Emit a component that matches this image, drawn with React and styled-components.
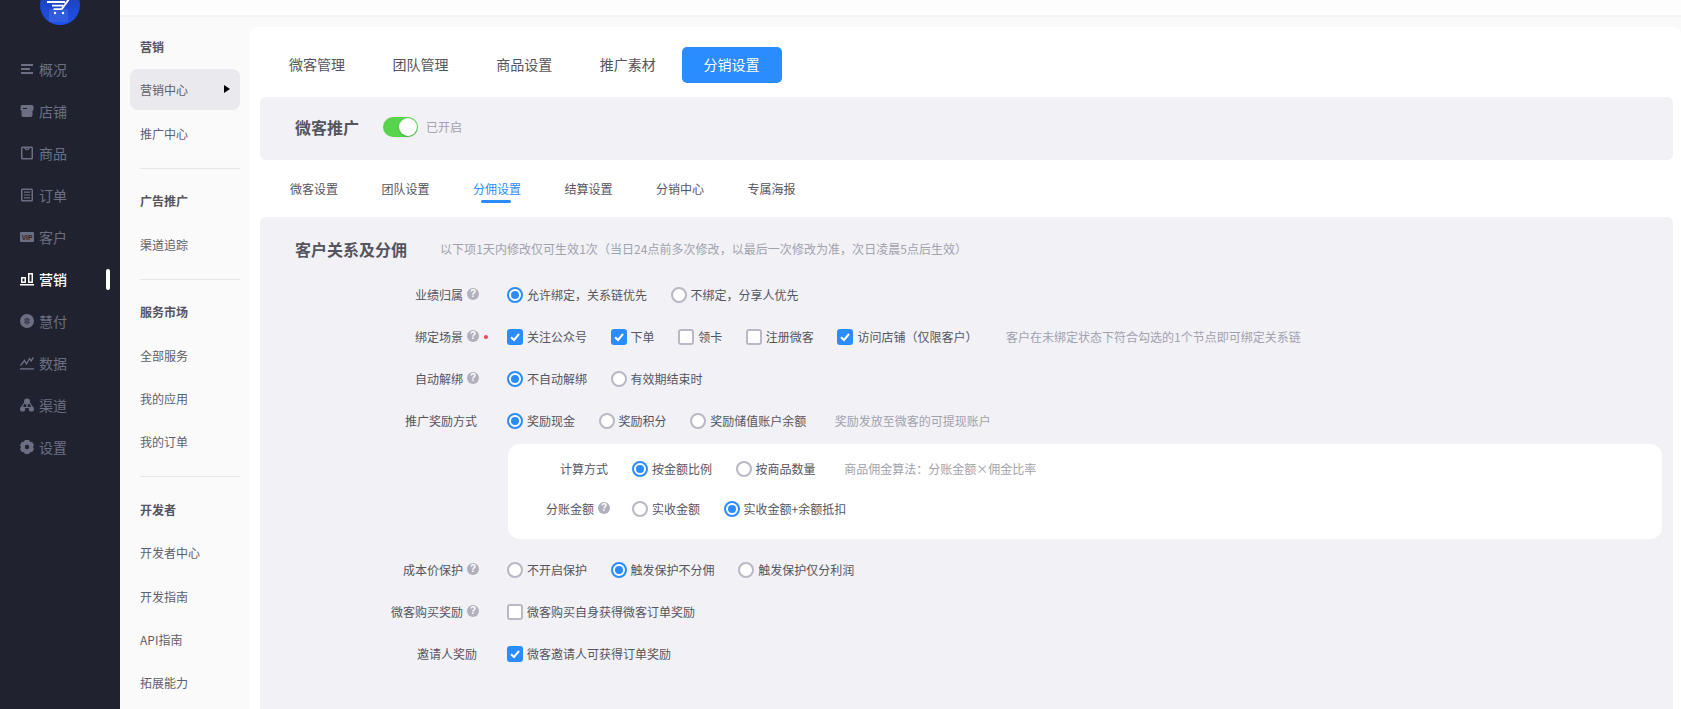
import React from "react";
import styled, { createGlobalStyle } from "styled-components";

const GlobalStyle = createGlobalStyle`
  * { box-sizing: border-box; }
  html, body { margin: 0; padding: 0; height: 100%; background: #fff; }
  body {
    font-family: "Noto Sans CJK SC", "Liberation Sans", sans-serif;
    color: #55555f;
    overflow: hidden;
  }
`;

const Page = styled.div`
  display: flex;
  width: 100%;
  height: 709px;
  overflow: hidden;
`;

const Sidebar = styled.aside`
  width: 120px;
  flex: none;
  background: #20232f;
`;

const Logo = styled.svg`
  display: block;
  width: 40px;
  height: 25px;
  margin: 0 auto 23px;
`;

const SideItem = styled.div`
  position: relative;
  display: flex;
  align-items: center;
  gap: 5px;
  height: 42px;
  padding-left: 20px;
  font-size: 14px;
  font-weight: ${({ $active }) => ($active ? 500 : 400)};
  color: ${({ $active }) => ($active ? "#fff" : "#6c6f83")};
  svg { width: 14px; height: 14px; flex: none; }
`;

const SideMark = styled.span`
  position: absolute;
  right: 10px;
  top: 11px;
  width: 4px;
  height: 21px;
  border-radius: 2px;
  background: #fff;
`;

const Body = styled.div`
  flex: 1;
  min-width: 0;
  display: flex;
  flex-direction: column;
  background: #fafafb;
`;

const TopBar = styled.div`
  height: 17px;
  flex: none;
  background: #fdfdfd;
  border-bottom: 2px solid #f3f3f4;
`;

const Columns = styled.div`
  flex: 1;
  display: flex;
  min-height: 0;
`;

const SubNav = styled.nav`
  width: 130px;
  flex: none;
  padding: 9px 10px 0 10px;
`;

const NavTitle = styled.div`
  display: flex;
  align-items: center;
  height: 41px;
  margin-bottom: 2.4px;
  padding-left: 10px;
  font-size: 12px;
  font-weight: 700;
  color: #55555f;
`;

const NavLink = styled.div`
  position: relative;
  display: flex;
  align-items: center;
  height: 41px;
  margin-bottom: 2.4px;
  padding-left: 10px;
  font-size: 12px;
  color: #5f5f69;
  border-radius: 8px;
  background: ${({ $active }) => ($active ? "#e9e9ee" : "transparent")};
`;

const NavArrow = styled.span`
  position: absolute;
  right: 10px;
  top: 16px;
  border-left: 6px solid #000;
  border-top: 4px solid transparent;
  border-bottom: 4px solid transparent;
`;

const NavLine = styled.div`
  height: 1px;
  margin: 14px 0 11.500px 10px;
  background: #e6e6e8;
`;

const Panel = styled.main`
  flex: 1;
  min-width: 0;
  margin-top: 10px;
  padding-top: 20px;
  background: #fff;
  border-radius: 8px 8px 0 0;
`;

const TopTabs = styled.div`
  display: flex;
  margin-left: 15.200px;
  height: 36px;
`;

const TopTab = styled.div`
  display: flex;
  align-items: center;
  margin-left: ${({ $active }) => ($active ? "2px" : "0")};
  padding: 0 ${({ $active }) => ($active ? "22px" : "23.800px")} 2px;
  font-size: 14px;
  border-radius: 5px;
  color: ${({ $active }) => ($active ? "#fff" : "#55555f")};
  background: ${({ $active }) => ($active ? "#2b8cff" : "transparent")};
`;

const SwitchCard = styled.section`
  display: flex;
  align-items: center;
  height: 63px;
  margin: 14px 8px 0 10px;
  padding: 0 0 3px 35px;
  background: #f1f1f6;
  border-radius: 6px;
`;

const CardTitle = styled.h2`
  margin: 0;
  font-size: 16px;
  font-weight: 700;
  color: #55555f;
`;

const Toggle = styled.span`
  position: relative;
  width: 35px;
  height: 20px;
  margin-left: 24px;
  border-radius: 10px;
  background: #58d34e;
  &::after {
    content: "";
    position: absolute;
    right: 1px;
    top: 1px;
    width: 18px;
    height: 18px;
    border-radius: 50%;
    background: #fff;
    box-shadow: 0 1px 2px rgba(0, 0, 0, 0.2);
  }
`;

const ToggleText = styled.span`
  margin-left: 8px;
  padding-bottom: 2px;
  font-size: 12px;
  color: #a2a2ae;
`;

const SubTabs = styled.div`
  display: flex;
  gap: 43.5px;
  height: 57px;
  padding-left: 40px;
`;

const SubTab = styled.div`
  position: relative;
  display: flex;
  align-items: center;
  font-size: 12px;
  color: ${({ $active }) => ($active ? "#2b8cff" : "#55555f")};
  ${({ $active }) =>
    $active &&
    `&::after {
      content: "";
      position: absolute;
      left: 8px;
      right: 10px;
      top: 40px;
      height: 3px;
      border-radius: 2px;
      background: #2b8cff;
    }`}
`;

const FormCard = styled.section`
  height: 520px;
  margin: 0 8px 0 10px;
  background: #f1f1f6;
  border-radius: 6px 6px 0 0;
`;

const FormHead = styled.div`
  display: flex;
  align-items: center;
  height: 57px;
  padding: 6px 0 0 35px;
`;

const HeadHint = styled.span`
  margin-left: 33px;
  font-size: 12px;
  letter-spacing: 0.04px;
  color: #a2a2ae;
`;

const Row = styled.div`
  display: flex;
  align-items: center;
  height: ${({ $inner }) => ($inner ? "40px" : "42px")};
  margin-top: ${({ $gap }) => $gap || 0}px;
`;

const Label = styled.div`
  position: relative;
  display: flex;
  align-items: center;
  justify-content: flex-end;
  gap: 4px;
  width: ${({ $inner }) => ($inner ? "102px" : "219px")};
  margin-right: ${({ $inner }) => ($inner ? "22px" : "28px")};
  padding-right: ${({ $help }) => ($help ? "0" : "2px")};
  padding-bottom: 2px;
  font-size: 12px;
  color: #55555f;
`;

const Help = styled.span`
  width: 12px;
  height: 12px;
  border-radius: 50%;
  background: #b1b0bc;
  color: #fff;
  font: 700 10px/12px "Liberation Sans", sans-serif;
  text-align: center;
`;

const RedDot = styled.span`
  position: absolute;
  right: -9px;
  top: 50%;
  width: 4px;
  height: 4px;
  margin-top: -2px;
  border-radius: 50%;
  background: #f5434f;
`;

const Choice = styled.span`
  display: flex;
  align-items: center;
  gap: 4px;
  margin-right: 23.600px;
  font-size: 12px;
  color: #55555f;
`;

const ChoiceText = styled.span`
  padding-bottom: 2px;
`;

const Radio = styled.span`
  width: 16px;
  height: 16px;
  flex: none;
  border-radius: 50%;
  background: #fff;
  border: 2px solid ${({ $on }) => ($on ? "#2b8cff" : "#b9b8c5")};
  display: flex;
  align-items: center;
  justify-content: center;
  &::after {
    content: "";
    width: 8px;
    height: 8px;
    border-radius: 50%;
    background: ${({ $on }) => ($on ? "#2b8cff" : "transparent")};
  }
`;

const CheckBox = styled.span`
  width: 16px;
  height: 16px;
  flex: none;
  border-radius: 3px;
  background: ${({ $on }) => ($on ? "#2b8cff" : "#fff")};
  border: 2px solid ${({ $on }) => ($on ? "#2b8cff" : "#b9b8c5")};
  svg { display: block; width: 12px; height: 12px; }
`;

const Hint = styled.span`
  margin-left: 5px;
  padding-bottom: 2px;
  font-size: 12px;
  color: #a2a2ae;
`;

const SubBox = styled.div`
  height: 95px;
  margin: 2px 11px 0 248px;
  padding-top: 5px;
  background: #fff;
  border-radius: 12px;
`;

const RadioItem = ({ on, children }) => (
  <Choice>
    <Radio $on={on} />
    <ChoiceText>{children}</ChoiceText>
  </Choice>
);

const CheckItem = ({ on, children }) => (
  <Choice>
    <CheckBox $on={on}>
      {on && (
        <svg viewBox="0 0 12 12" fill="none" stroke="#fff" strokeWidth="2">
          <path d="M2 6.2 5 9l5-6" />
        </svg>
      )}
    </CheckBox>
    <ChoiceText>{children}</ChoiceText>
  </Choice>
);

const icons = {
  overview: <path d="M1 2h12v2H1zM1 6h9v2H1zM1 10h12v2H1z" />,
  shop: (
    <path
      fillRule="evenodd"
      d="M2 1h10a1.500 1.500 0 0 1 1.500 1.500V6l-1 .8v4.200A2 2 0 0 1 10.500 13h-7a2 2 0 0 1-2-2V6.800l-1-.8V2.500A1.500 1.500 0 0 1 2 1zM3 4v1h4V4z"
    />
  ),
  goods: (
    <path
      fillRule="evenodd"
      d="M2.500 .5h9A1.500 1.500 0 0 1 13 2v10a1.500 1.500 0 0 1-1.500 1.500h-9A1.500 1.500 0 0 1 1 12V2A1.500 1.500 0 0 1 2.500 .5zM2.500 2v10h9V2h-1.600a3 3 0 0 1-5.800 0zm3.200 0a1.500 1.500 0 0 0 2.600 0z"
    />
  ),
  order: (
    <path
      fillRule="evenodd"
      d="M2.500 .5h9A1.500 1.500 0 0 1 13 2v10a1.500 1.500 0 0 1-1.500 1.500h-9A1.500 1.500 0 0 1 1 12V2A1.500 1.500 0 0 1 2.500 .5zM2.500 2v10h9V2zM4 3.500h6v1.200H4zM4 6.400h6v1.200H4zM4 9.300h6v1.200H4z"
    />
  ),
  market: (
    <path
      fillRule="evenodd"
      d="M1 5h5v6H1zM2.500 6.500v3h2v-3zM8 1h5v10H8zM9.500 2.500v7h2v-7zM0 12h14v1.600H0z"
    />
  ),
  pay: (
    <path
      fillRule="evenodd"
      d="M7 0a7 7 0 1 1 0 14A7 7 0 0 1 7 0zM4.500 4.800v1h5v-1zM4.500 6.500v1h5v-1zM4.500 8.200v1h5v-1zM6.500 3.500v7h1v-7z"
    />
  ),
  data: (
    <>
      <path d="M0 12.200h14v1.400H0z" />
      <path d="M.5 9.500 4.500 4.500l2 3.500L9.500 2.500l1.500 2.500L13.500 1.500" fill="none" stroke="currentColor" strokeWidth="1.300" />
    </>
  ),
  channel: (
    <>
      <circle cx="7" cy="3.500" r="3" />
      <circle cx="2.600" cy="11" r="2.600" />
      <circle cx="11.400" cy="11" r="2.600" />
      <path d="M6 2.500 1.500 9.500h11L8 2.500z" fill="none" stroke="currentColor" strokeWidth="1.200" />
      <path d="M6.300 6h1.400v4H6.300z" />
    </>
  ),
  setting: (
    <path
      fillRule="evenodd"
      d="M5 0h4l1 1.800 2.200.2L14 5l-1 2 1 2-1.800 3-2.200.200-1 1.800H5l-1-1.800L1.800 12 0 9l1-2-1-2 1.800-3L4 1.800zM7 4.800a2.200 2.200 0 1 0 0 4.400 2.200 2.200 0 0 0 0-4.400z"
    />
  ),
};

const SideIcon = ({ name }) => {
  if (name === "vip") {
    return (
      <svg viewBox="0 0 14 14">
        <rect y="2" width="14" height="10" rx="1" fill="currentColor" />
        <text x="7" y="9.800" textAnchor="middle" fontSize="6.500" fontWeight="700" fontFamily="Liberation Sans" fill="#20232f">
          VIP
        </text>
      </svg>
    );
  }
  return (
    <svg viewBox="0 0 14 14" fill="currentColor">
      {icons[name]}
    </svg>
  );
};

const sideItems = [
  ["overview", "概况"],
  ["shop", "店铺"],
  ["goods", "商品"],
  ["order", "订单"],
  ["vip", "客户"],
  ["market", "营销"],
  ["pay", "慧付"],
  ["data", "数据"],
  ["channel", "渠道"],
  ["setting", "设置"],
];

const navGroups = [
  { title: "营销", links: ["营销中心", "推广中心"] },
  { title: "广告推广", links: ["渠道追踪"] },
  { title: "服务市场", links: ["全部服务", "我的应用", "我的订单"] },
  { title: "开发者", links: ["开发者中心", "开发指南", "API指南", "拓展能力"] },
];

const topTabs = ["微客管理", "团队管理", "商品设置", "推广素材", "分销设置"];
const subTabs = ["微客设置", "团队设置", "分佣设置", "结算设置", "分销中心", "专属海报"];

export default function App() {
  return (
    <Page>
      <GlobalStyle />
      <Sidebar>
        <Logo viewBox="0 0 40 25">
          <defs>
            <linearGradient id="logoBlue" x1="0" y1="0" x2="0" y2="1">
              <stop offset="0" stopColor="#1c3aa8" />
              <stop offset="1" stopColor="#1f52ee" />
            </linearGradient>
          </defs>
          <circle cx="20" cy="5" r="20" fill="url(#logoBlue)" />
          <rect x="9" y="9" width="19" height="13" rx="1" fill="#4a72d8" opacity="0.45" />
          <path d="M7 2h18M12 5.700h11M13.500 9.200h8" fill="none" stroke="#fff" strokeWidth="1.800" />
          <path d="M21.500 9.500 29 -1" fill="none" stroke="#fff" strokeWidth="2" />
          <circle cx="15" cy="13" r="1.200" fill="#fff" />
          <circle cx="23" cy="13" r="1.200" fill="#fff" />
        </Logo>
        {sideItems.map(([icon, text]) => (
          <SideItem key={text} $active={text === "营销"}>
            <SideIcon name={icon} />
            {text}
            {text === "营销" && <SideMark />}
          </SideItem>
        ))}
      </Sidebar>
      <Body>
        <TopBar />
        <Columns>
          <SubNav>
            {navGroups.map((group, i) => (
              <div key={group.title}>
                {i > 0 && <NavLine />}
                <NavTitle>{group.title}</NavTitle>
                {group.links.map((link) => (
                  <NavLink key={link} $active={link === "营销中心"}>
                    {link}
                    {link === "营销中心" && <NavArrow />}
                  </NavLink>
                ))}
              </div>
            ))}
          </SubNav>
          <Panel>
            <TopTabs>
              {topTabs.map((tab) => (
                <TopTab key={tab} $active={tab === "分销设置"}>
                  {tab}
                </TopTab>
              ))}
            </TopTabs>
            <SwitchCard>
              <CardTitle>微客推广</CardTitle>
              <Toggle />
              <ToggleText>已开启</ToggleText>
            </SwitchCard>
            <SubTabs>
              {subTabs.map((tab) => (
                <SubTab key={tab} $active={tab === "分佣设置"}>
                  {tab}
                </SubTab>
              ))}
            </SubTabs>
            <FormCard>
              <FormHead>
                <CardTitle>客户关系及分佣</CardTitle>
                <HeadHint>以下项1天内修改仅可生效1次（当日24点前多次修改，以最后一次修改为准，次日凌晨5点后生效）</HeadHint>
              </FormHead>
              <Row>
                <Label $help>
                  业绩归属<Help>?</Help>
                </Label>
                <RadioItem on>允许绑定，关系链优先</RadioItem>
                <RadioItem>不绑定，分享人优先</RadioItem>
              </Row>
              <Row>
                <Label $help>
                  绑定场景<Help>?</Help>
                  <RedDot />
                </Label>
                <CheckItem on>关注公众号</CheckItem>
                <CheckItem on>下单</CheckItem>
                <CheckItem>领卡</CheckItem>
                <CheckItem>注册微客</CheckItem>
                <CheckItem on>访问店铺（仅限客户）</CheckItem>
                <Hint>客户在未绑定状态下符合勾选的1个节点即可绑定关系链</Hint>
              </Row>
              <Row>
                <Label $help>
                  自动解绑<Help>?</Help>
                </Label>
                <RadioItem on>不自动解绑</RadioItem>
                <RadioItem>有效期结束时</RadioItem>
              </Row>
              <Row>
                <Label>推广奖励方式</Label>
                <RadioItem on>奖励现金</RadioItem>
                <RadioItem>奖励积分</RadioItem>
                <RadioItem>奖励储值账户余额</RadioItem>
                <Hint>奖励发放至微客的可提现账户</Hint>
              </Row>
              <SubBox>
                <Row $inner>
                  <Label $inner>计算方式</Label>
                  <RadioItem on>按金额比例</RadioItem>
                  <RadioItem>按商品数量</RadioItem>
                  <Hint>商品佣金算法：分账金额×佣金比率</Hint>
                </Row>
                <Row $inner>
                  <Label $inner $help>
                    分账金额<Help>?</Help>
                  </Label>
                  <RadioItem>实收金额</RadioItem>
                  <RadioItem on>实收金额+余额抵扣</RadioItem>
                </Row>
              </SubBox>
              <Row $gap={10}>
                <Label $help>
                  成本价保护<Help>?</Help>
                </Label>
                <RadioItem>不开启保护</RadioItem>
                <RadioItem on>触发保护不分佣</RadioItem>
                <RadioItem>触发保护仅分利润</RadioItem>
              </Row>
              <Row>
                <Label $help>
                  微客购买奖励<Help>?</Help>
                </Label>
                <CheckItem>微客购买自身获得微客订单奖励</CheckItem>
              </Row>
              <Row>
                <Label>邀请人奖励</Label>
                <CheckItem on>微客邀请人可获得订单奖励</CheckItem>
              </Row>
            </FormCard>
          </Panel>
        </Columns>
      </Body>
    </Page>
  );
}
